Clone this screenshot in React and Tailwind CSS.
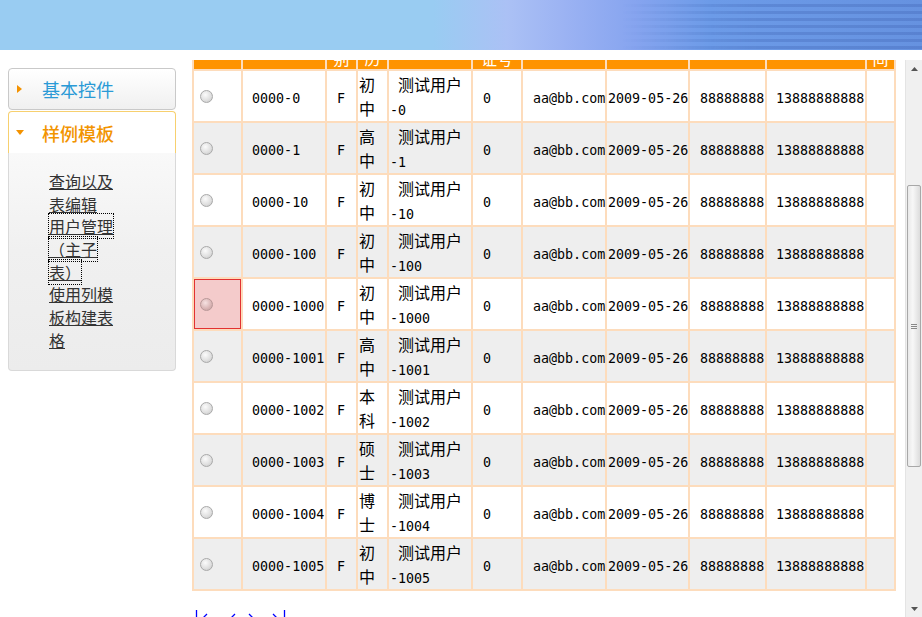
import React from 'react'

const rows = [
  ['0', '初', '中'],
  ['1', '高', '中'],
  ['10', '初', '中'],
  ['100', '初', '中'],
  ['1000', '初', '中'],
  ['1001', '高', '中'],
  ['1002', '本', '科'],
  ['1003', '硕', '士'],
  ['1004', '博', '士'],
  ['1005', '初', '中'],
]

const widths = ['w-[47px]', 'w-[82px]', 'w-[29px]', 'w-[29px]', 'w-[82px]', 'w-[48px]', 'w-[82px]', 'w-[81px]', 'w-[75px]', 'w-[98px]', 'w-[27px]']

// latin text in the grid is half width, 8px a char
function M({ children }) {
  return <span className="font-['DejaVu_Sans_Mono',monospace] text-[13.33px]">{children}</span>
}

function Radio({ active }) {
  return (
    <span
      className={
        active
          ? 'block w-[13px] h-[13px] rounded-full border border-[#b89898] bg-[radial-gradient(circle_at_40%_35%,#f6e2e2_0%,#d9b4b4_60%,#c09a9a_100%)]'
          : 'block w-[13px] h-[13px] rounded-full border border-[#a9a9a9] bg-[radial-gradient(circle_at_40%_35%,#fbfbfb_0%,#dedede_60%,#c2c2c2_100%)]'
      }
    />
  )
}

// one cell: lines of 24px, centred in 50px
function Cell({ lines, className = '' }) {
  return (
    <div className={`h-[50px] flex flex-col justify-center whitespace-nowrap ${className}`}>
      {lines.map((l, i) => (
        <div key={i} className="h-[24px] leading-[24px]">
          {l}
        </div>
      ))}
    </div>
  )
}

function Sidebar() {
  const focus = 'border border-dotted border-black'
  return (
    <div className="ml-[8px] mt-[18px] w-[168px] shrink-0">
      <div className="h-[42px] border border-[#c9c9c9] rounded-[4px] bg-[linear-gradient(180deg,#ffffff,#f0f0f0)] flex items-center pl-[8px]">
        <svg width="6" height="8" viewBox="0 0 6 8">
          <path d="M0 0 L5 4 L0 8 Z" fill="#f39200" />
        </svg>
        <span className="ml-[19px] text-[18px] text-[#2a9ad6] leading-none">基本控件</span>
      </div>
      <div className="mt-[1px] h-[42px] border border-b-0 border-[#f7d06f] rounded-t-[4px] bg-white flex items-center pl-[7px]">
        <svg width="8" height="5" viewBox="0 0 8 5">
          <path d="M0 0 L8 0 L4 5 Z" fill="#f39200" />
        </svg>
        <span className="ml-[18px] text-[18px] font-medium text-[#f29400] leading-none">样例模板</span>
      </div>
      <div className="h-[218px] border border-t-0 border-[#d9d9d9] rounded-b-[4px] bg-[linear-gradient(180deg,#f9f9f9_0%,#f0f0f0_45%,#ececec_100%)] pt-[17px] pl-[40px]">
        <div className="text-[16px] leading-[22.7px] text-[#333] [text-spacing-trim:space-all]">
          <div className="h-[22.7px]"><a className="underline">查询以及</a></div>
          <div className="h-[22.7px]"><a className="underline">表编辑</a></div>
          <div className="h-[22.7px] -ml-[1px]"><a className={`underline ${focus}`}>用户管理</a></div>
          <div className="h-[22.7px] -ml-[1px]"><a className={`underline ${focus}`}>（主子</a></div>
          <div className="h-[22.7px] -ml-[1px]"><a className={`underline ${focus}`}>表）</a></div>
          <div className="h-[22.7px]"><a className="underline">使用列模</a></div>
          <div className="h-[22.7px]"><a className="underline">板构建表</a></div>
          <div className="h-[22.7px]"><a className="underline">格</a></div>
        </div>
      </div>
    </div>
  )
}

function Grid() {
  const head = ['选择', '编号', '性别', '学历', '姓名', '身份证号', '邮箱', '注册日期', '电话', '手机', '时间']
  return (
    <table className="table-fixed w-[704px] border-separate border-spacing-[2px] bg-[#fddcbc] text-black">
      <colgroup>
        {widths.map((w, i) => (
          <col key={i} className={w} />
        ))}
      </colgroup>
      <thead>
        <tr>
          {head.map((h, i) => (
            <th key={i} className="h-[40px] p-0 bg-[#fe9300] text-white text-[16px] leading-[18px] font-normal text-center align-middle">
              {h === '身份证号' ? (
                <>
                  身份
                  <br />
                  证号
                </>
              ) : (
                h
              )}
            </th>
          ))}
        </tr>
      </thead>
      <tbody className="text-[16px]">
        {rows.map(([n, e1, e2], i) => {
          const bg = i % 2 ? 'bg-[#eeeeee]' : 'bg-white'
          const td = `h-[50px] p-0 align-middle ${bg}`
          const active = i === 4
          return (
            <tr key={n}>
              <td
                className={
                  active
                    ? 'h-[50px] p-0 align-middle bg-[#f4cbcb] outline outline-1 outline-[#e23232] -outline-offset-1'
                    : td
                }
              >
                <div className="h-[50px] flex items-center pl-[6px]">
                  <Radio active={active} />
                </div>
              </td>
              <td className={td}>
                <Cell className="pl-[9px]" lines={[<M>0000-{n}</M>]} />
              </td>
              <td className={td}>
                <Cell className="pl-[10px]" lines={[<M>F</M>]} />
              </td>
              <td className={td}>
                <Cell className="pl-[1px]" lines={[e1, e2]} />
              </td>
              <td className={td}>
                <Cell className="pl-[1px]" lines={[<span className="pl-[8px]">测试用户</span>, <M>-{n}</M>]} />
              </td>
              <td className={td}>
                <Cell className="pl-[10px]" lines={[<M>0</M>]} />
              </td>
              <td className={td}>
                <Cell className="pl-[10px]" lines={[<M>aa@bb.com</M>]} />
              </td>
              <td className={td}>
                <Cell className="pl-[1px]" lines={[<M>2009-05-26</M>]} />
              </td>
              <td className={td}>
                <Cell className="pl-[10px]" lines={[<M>88888888</M>]} />
              </td>
              <td className={td}>
                <Cell className="pl-[9px]" lines={[<M>13888888888</M>]} />
              </td>
              <td className={td}>
                <div className="h-[50px]" />
              </td>
            </tr>
          )
        })}
      </tbody>
    </table>
  )
}

function Pager() {
  return (
    <div className="mt-[18px] flex items-start">
      <svg width="16" height="16" viewBox="0 0 16 16" fill="none" stroke="#0000ff" strokeWidth="1.3">
        <path d="M4.5 1 V15" />
        <path d="M15 5 L10 10 L15 15" />
      </svg>
      <svg className="ml-[16px]" width="16" height="16" viewBox="0 0 16 16" fill="none" stroke="#0000ff" strokeWidth="1.3">
        <path d="M11 5 L6 10 L11 15" />
      </svg>
      <svg className="ml-[6px]" width="16" height="16" viewBox="0 0 16 16" fill="none" stroke="#0000ff" strokeWidth="1.3">
        <path d="M3 5 L8 10 L3 15" />
      </svg>
      <svg className="ml-[8px]" width="16" height="16" viewBox="0 0 16 16" fill="none" stroke="#0000ff" strokeWidth="1.3">
        <path d="M3 5 L8 10 L3 15" />
        <path d="M14.5 1 V15" />
      </svg>
    </div>
  )
}

function ScrollBar() {
  return (
    <div className="w-[17px] h-full flex flex-col bg-[#f0f0f0] border-l border-[#e4e4e4]">
      <div className="h-[17px] flex items-center justify-center">
        <svg width="7" height="4" viewBox="0 0 7 4">
          <path d="M0 4 L3.5 0 L7 4 Z" fill="#555" />
        </svg>
      </div>
      <div className="h-[108px]" />
      <div className="mx-[1px] h-[282px] rounded-[2px] border border-[#a8a8a8] bg-[linear-gradient(90deg,#e9e9e9,#f7f7f7_40%,#dcdcdc)] flex items-center justify-center">
        <div className="flex flex-col gap-[1px]">
          <div className="w-[6px] h-px bg-[#888]" />
          <div className="w-[6px] h-px bg-[#888]" />
          <div className="w-[6px] h-px bg-[#888]" />
        </div>
      </div>
      <div className="flex-1" />
      <div className="h-[17px] flex items-center justify-center">
        <svg width="7" height="4" viewBox="0 0 7 4">
          <path d="M0 0 L7 0 L3.5 4 Z" fill="#555" />
        </svg>
      </div>
    </div>
  )
}

export default function App() {
  return (
    <div className="w-[922px] h-[617px] overflow-hidden bg-white font-['Noto_Sans_CJK_SC',sans-serif] flex flex-col">
      <div className="h-[50px] shrink-0 flex bg-[linear-gradient(90deg,#99ccf2_0%,#99ccf2_47%,#abc1f5_55%,#9cb3f3_61%,#86a4ef_69%,#6c9be8_77%,#6692e0_100%)]">
        <div className="ml-auto w-[300px] h-full bg-[repeating-linear-gradient(180deg,transparent_0px,transparent_4px,rgba(40,70,150,0.2)_4px,rgba(40,70,150,0.2)_7px)] [mask-image:linear-gradient(90deg,transparent,black_45%)]" />
      </div>
      <div className="flex flex-1 min-h-0">
        <Sidebar />
        <div className="flex-1 mt-[10px] h-[557px] flex">
          <div className="flex-1 overflow-hidden pl-[16px]">
            <div className="-mt-[33px]">
              <Grid />
              <Pager />
            </div>
          </div>
          <ScrollBar />
        </div>
      </div>
    </div>
  )
}
